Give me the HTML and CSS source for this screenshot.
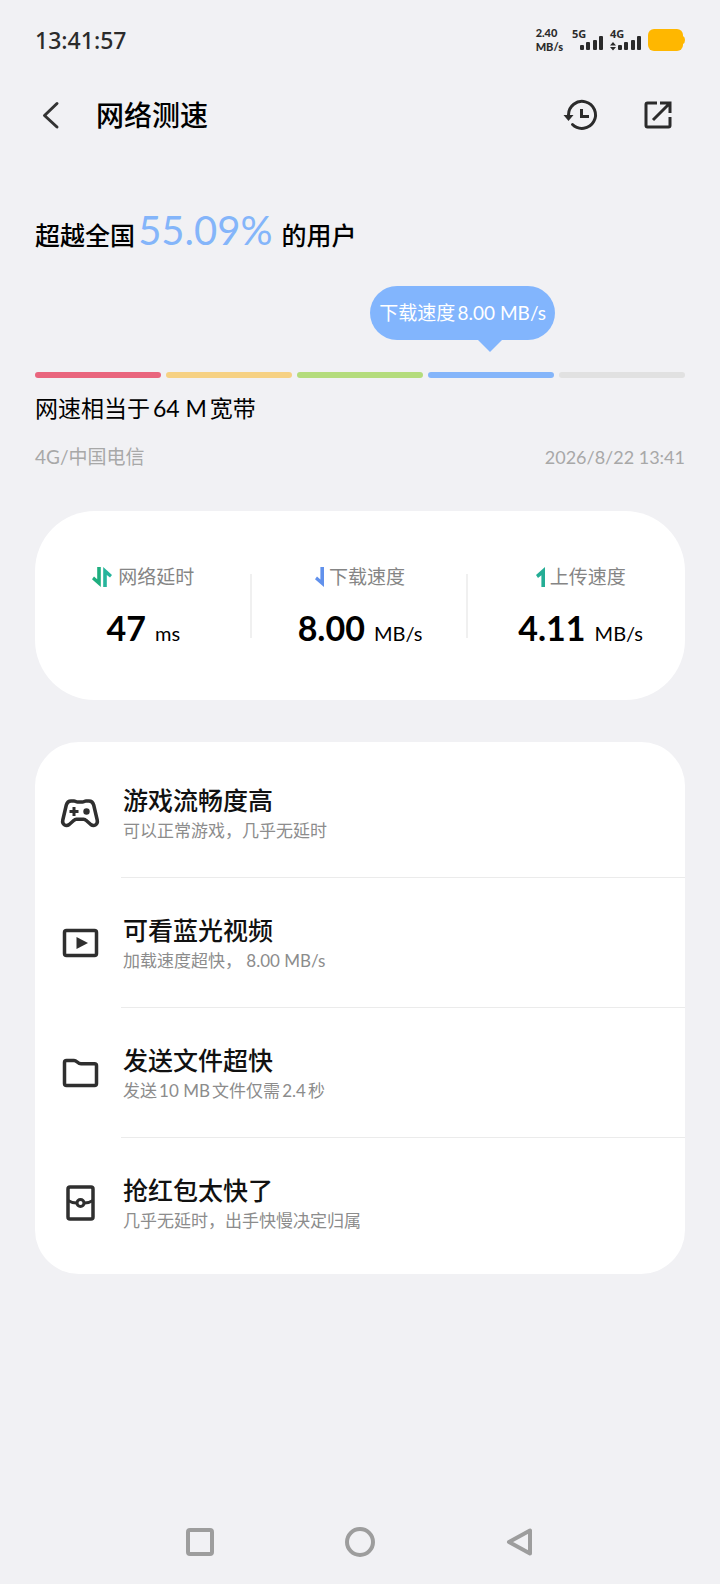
FILE: index.html
```html
<!doctype html>
<html lang="zh-CN">
<head>
	<meta charset="UTF-8">
	<meta name="viewport" content="width=device-width, initial-scale=1">
	<title>网络测速</title>
	<link rel="stylesheet" href="styles.css">
</head>
<body>
	<div class="status">
		<span class="time">13:41:57</span>
		<div class="status-right">
			<div class="rate">2.40<br>MB/s</div>
			<div class="signal">
				<span>5G</span>
				<svg width="32" height="22" viewBox="0 0 32 22"><g fill="#2b2b2b"><rect x="8" y="16" width="4" height="5" rx="1"/><rect x="14" y="13" width="4" height="8" rx="1"/><rect x="21" y="11" width="4" height="10" rx="1"/><rect x="27" y="7" width="4" height="14" rx="1"/></g></svg>
			</div>
			<div class="signal">
				<span>4G</span>
				<svg width="32" height="22" viewBox="0 0 32 22"><g fill="#2b2b2b"><path d="M0 16.500L3 13l3 3.500zM0 18l3 3.500L6 18z"/><rect x="8" y="16" width="4" height="5" rx="1"/><rect x="14" y="13" width="4" height="8" rx="1"/><rect x="21" y="11" width="4" height="10" rx="1"/><rect x="27" y="7" width="4" height="14" rx="1"/></g></svg>
			</div>
			<svg class="battery" width="37" height="22" viewBox="0 0 37 22"><rect width="35" height="22" rx="6" fill="#ffb700"/><path d="M35 7q2 1 2 4t-2 4z" fill="#ffb700"/></svg>
		</div>
	</div>

	<header class="header">
		<button class="icon-btn" aria-label="返回">
			<svg width="32" height="32" viewBox="0 0 32 32"><path d="M22 4.500L9.500 16.500l12.500 11.500" fill="none" stroke="#333" stroke-width="3" stroke-linecap="round" stroke-linejoin="round"/></svg>
		</button>
		<h1>网络测速</h1>
		<button class="icon-btn" aria-label="历史记录">
			<svg width="36" height="36" viewBox="0 0 36 36"><g fill="none" stroke="#2b2b2b" stroke-width="3"><path d="M5.500 18A13.500 13.500 0 1 1 9.500 27.500" stroke-linecap="round"/><path d="M18.500 12v7.500h7.500"/></g><path d="M.5 18h10l-5 6z" fill="#2b2b2b"/></svg>
		</button>
		<button class="icon-btn" aria-label="分享">
			<svg width="36" height="36" viewBox="0 0 36 36"><g fill="none" stroke="#2b2b2b" stroke-width="3"><path d="M17 6H7.500A1.500 1.500 0 0 0 6 7.500v21A1.500 1.500 0 0 0 7.500 30h21a1.500 1.500 0 0 0 1.500-1.500V20"/><path d="M20 6h10v10M29 7L13 23"/></g></svg>
		</button>
	</header>

	<main>
		<p class="rank">超越全国<strong>55.09%</strong>的用户</p>

		<div class="scale">
			<i class="red"></i>
			<i class="yellow"></i>
			<i class="green"></i>
			<i class="blue"><span class="tip">下载速度8.00 MB/s</span></i>
			<i class="gray"></i>
		</div>
		<p class="equal">网速相当于64 M宽带</p>
		<div class="info"><span>4G/中国电信</span><span class="date">2026/8/22 13:41</span></div>

		<section class="stats">
			<div class="stat">
				<div class="label">
					<svg width="20" height="20" viewBox="0 0 20 20"><path d="M5.200 0h3.600v20L0 12.200l2-2.600 3.200 2.600z" fill="#1fae7f"/><path d="M14.800 20h-3.600V0L20 8l-2 2.600-3.200-2.600z" fill="#26b59c"/></svg>
					网络延时
				</div>
				<div class="value"><b>47</b>ms</div>
			</div>
			<div class="stat">
				<div class="label down">
					<svg width="9" height="20" viewBox="0 0 9 20"><path d="M5.400 0H9v20L0 12.200l2-2.600 3.400 2.800z" fill="#6191ec"/></svg>
					下载速度
				</div>
				<div class="value"><b>8.00</b>MB/s</div>
			</div>
			<div class="stat">
				<div class="label up">
					<svg width="9" height="20" viewBox="0 0 9 20"><path d="M5.400 20H9V0L0 8l2 3 3.400-2.800z" fill="#24ad95"/></svg>
					上传速度
				</div>
				<div class="value"><b>4.11</b>MB/s</div>
			</div>
		</section>

		<ul class="list">
			<li>
				<svg width="40" height="40" viewBox="0 0 40 40"><path d="M11 8h3c1.500 0 2 1 3.500 1h5c1.500 0 2-1 3.500-1h3c2.500 0 4 1.500 4.700 4l3.500 15c1 4.500-3.200 7-6.400 4.500L26 27.300c-.6-.7-1.400-1-2.400-1h-7.200c-1 0-1.800.3-2.400 1L9.200 31.500C6 34 1.800 31.500 2.800 27L6.300 12C7 9.500 8.500 8 11 8z" fill="none" stroke="#2f2f2f" stroke-width="3.500" stroke-linejoin="round"/><path d="M14 14v9M9.500 18.500h9" stroke="#2f2f2f" stroke-width="3"/><circle cx="26.500" cy="18.500" r="3.200" fill="#2f2f2f"/></svg>
				<div class="text"><h2>游戏流畅度高</h2><p>可以正常游戏，几乎无延时</p></div>
			</li>
			<li>
				<svg width="40" height="40" viewBox="0 0 40 40"><rect x="4.500" y="7.500" width="32" height="25" rx="2" fill="none" stroke="#2f2f2f" stroke-width="3.500"/><path d="M16.500 14l11.500 6-11.500 6z" fill="#2f2f2f"/></svg>
				<div class="text"><h2>可看蓝光视频</h2><p>加载速度超快， 8.00 MB/s</p></div>
			</li>
			<li>
				<svg width="40" height="40" viewBox="0 0 40 40"><path d="M6.500 7.500H14c3 0 3.500 3.300 7 3.300h13.500a2 2 0 0 1 2 2v17.700a2 2 0 0 1-2 2h-28a2 2 0 0 1-2-2v-21a2 2 0 0 1 2-2z" fill="none" stroke="#2f2f2f" stroke-width="3.500"/></svg>
				<div class="text"><h2>发送文件超快</h2><p>发送10 MB文件仅需2.4秒</p></div>
			</li>
			<li>
				<svg width="40" height="40" viewBox="0 0 40 40"><g fill="none" stroke="#2f2f2f"><rect x="8" y="4" width="25" height="32" rx="2" stroke-width="3.500"/><path d="M8 17.500q4 2.500 8.500 2.500M33 17.500q-4 2.500-8.500 2.500" stroke-width="3"/><circle cx="20.500" cy="20" r="3.500" stroke-width="3"/></g></svg>
				<div class="text"><h2>抢红包太快了</h2><p>几乎无延时，出手快慢决定归属</p></div>
			</li>
		</ul>
	</main>

	<nav class="nav">
		<button aria-label="最近任务"><svg width="32" height="32" viewBox="0 0 32 32"><rect x="4" y="4" width="24" height="24" rx="2" fill="none" stroke="#9d9d9d" stroke-width="4"/></svg></button>
		<button aria-label="主页"><svg width="32" height="32" viewBox="0 0 32 32"><circle cx="16" cy="16" r="13" fill="none" stroke="#9d9d9d" stroke-width="4"/></svg></button>
		<button aria-label="后退"><svg width="32" height="32" viewBox="0 0 32 32"><path d="M26 4.500v23L5 16z" fill="none" stroke="#9d9d9d" stroke-width="4" stroke-linejoin="round"/></svg></button>
	</nav>
</body>
</html>
```
FILE: styles.css
```css
*{
	box-sizing: border-box;
}
body,h1,h2,p,ul,li{
	margin:0;
	padding:0;
	list-style: none;
	font-weight: normal;
}
body{
	min-height: 100vh;
	display: flex;
	flex-direction: column;
	background: #f1f1f4;
	color: #000;
	font-family: Lato, "Noto Sans CJK SC", sans-serif;
	text-autospace: normal;
}
svg{
	display: block;
	flex: none;
}
button{
	border: 0;
	padding: 0;
	background: none;
}

/* 状态栏 */
.status{
	height: 80px;
	padding: 0 35px;
	display: flex;
	align-items: center;
	justify-content: space-between;
	color: #2b2b2b;
}
.time{
	font: 500 23px/32px "Noto Sans", sans-serif;
}
.status-right{
	display: flex;
	align-items: center;
	gap: 6px;
}
.rate{
	margin-right: 3px;
	font-size: 11px;
	line-height: 14px;
	font-weight: 900;
}
.signal{
	position: relative;
}
.signal span{
	position: absolute;
	left: 0;
	top: 0;
	font: bold 11px/10px "Noto Sans", sans-serif;
}

/* 标题栏 */
.header{
	height: 70px;
	padding: 0 44px 0 35px;
	display: flex;
	align-items: center;
	gap: 41px;
}
.header h1{
	flex: 1;
	margin-left: -12px;
	font-size: 28px;
	line-height: 40px;
	font-weight: 500;
}

main{
	padding: 0 35px;
}
.rank{
	margin-top: 52px;
	font-size: 25px;
	line-height: 56px;
	font-weight: 500;
}
.rank strong{
	margin: 0 4px 0 0;
	color: #84b5fa;
	font-size: 40px;
	font-weight: normal;
}

/* 速度刻度 */
.scale{
	margin-top: 109px;
	display: grid;
	grid-template-columns: repeat(5, 1fr);
	gap: 5px;
}
.scale i{
	position: relative;
	height: 6px;
	border-radius: 3px;
	font-style: normal;
}
.red{
	background: #e9657d;
}
.yellow{
	background: #f6d183;
}
.green{
	background: #b4dc7c;
}
.blue{
	background: #84b5fa;
}
.gray{
	background: #e1e1e1;
}
.tip{
	position: absolute;
	right: -1px;
	bottom: 38px;
	padding: 0 9px;
	border-radius: 27px;
	background: #82b5fd;
	color: #fff;
	font-size: 19px;
	line-height: 54px;
	white-space: nowrap;
}
.tip:after{
	content: "";
	position: absolute;
	right: 53px;
	top: 100%;
	border: 12px solid transparent;
	border-top-color: #82b5fd;
	border-bottom: 0;
}
.equal{
	margin-top: 12px;
	font-size: 23px;
	line-height: 36px;
}
.info{
	margin-top: 16px;
	display: flex;
	justify-content: space-between;
	color: #a8a8a8;
	font-size: 19px;
	line-height: 30px;
}
.date{
	font-size: 18px;
}

/* 测速结果 */
.stats{
	margin-top: 39px;
	padding: 6px 0 0;
	height: 189px;
	display: grid;
	grid-template-columns: repeat(3, 1fr);
	align-items: center;
	border-radius: 60px;
	background: #fff;
}
.stat{
	position: relative;
	display: flex;
	flex-direction: column;
	align-items: center;
	gap: 14px;
}
.stat + .stat:before{
	content: "";
	position: absolute;
	left: 0;
	top: 12px;
	width: 2px;
	height: 64px;
	margin-left: -2px;
	background: #f0f0f0;
}
.stat:last-child{
	padding-left: 8px;
}
.label{
	display: flex;
	align-items: center;
	gap: 6px;
	color: #858585;
	font-size: 19px;
	line-height: 30px;
}
.label.down,.label.up{
	gap: 5px;
}
.value{
	font-size: 20px;
	line-height: 44px;
}
.value b{
	margin-right: 9px;
	font-size: 34px;
}

/* 体验列表 */
.list{
	margin-top: 42px;
	padding: 6px 0;
	border-radius: 44px;
	background: #fff;
}
.list li{
	padding-left: 25px;
	display: flex;
	align-items: center;
	gap: 21px;
}
.text{
	flex: 1;
	height: 130px;
	padding: 35px 2px 0;
	border-bottom: 1px solid #ebebeb;
}
.list li:last-child .text{
	border-bottom: 0;
}
.list h2{
	color: #111;
	font-size: 25px;
	line-height: 34px;
	font-weight: 500;
}
.list p{
	color: #8c8c8c;
	font-size: 17px;
	line-height: 28px;
}

/* 底部导航 */
.nav{
	margin-top: auto;
	height: 84px;
	display: flex;
	align-items: center;
	justify-content: center;
	gap: 128px;
}
```
